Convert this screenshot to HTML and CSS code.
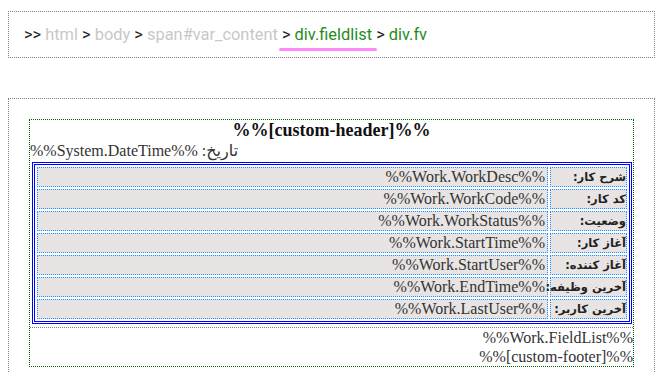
FILE: index.html
```html
<!DOCTYPE html>
<html lang="fa">
<head>
    <meta charset="UTF-8">
    <title>Field List</title>
    <link rel="stylesheet" href="styles.css">
</head>
<body>
    <!-- element path -->
    <div class="crumbs">
        <span class="sep">&gt;&gt;</span>
        <span class="off">html</span>
        <span class="sep">&gt;</span>
        <span class="off">body</span>
        <span class="sep">&gt;</span>
        <span class="off">span#var_content</span>
        <span class="mark"><span class="sep">&gt;</span> <span class="on">div.fieldlist</span></span>
        <span class="sep">&gt;</span>
        <span class="on">div.fv</span>
    </div>

    <div class="page">
        <div class="fieldlist">
            <div class="head">%%[custom-header]%%</div>
            <div class="date" dir="rtl">تاریخ: %%System.DateTime%%</div>

            <div class="fv">
                <table class="fields" dir="rtl">
                    <tr><th>شرح کار:</th><td>%%Work.WorkDesc%%</td></tr>
                    <tr><th>کد کار:</th><td>%%Work.WorkCode%%</td></tr>
                    <tr><th>وضعیت:</th><td>%%Work.WorkStatus%%</td></tr>
                    <tr><th>آغاز کار:</th><td>%%Work.StartTime%%</td></tr>
                    <tr><th>آغاز کننده:</th><td>%%Work.StartUser%%</td></tr>
                    <tr><th>آخرین وظیفه:</th><td>%%Work.EndTime%%</td></tr>
                    <tr><th>آخرین کاربر:</th><td>%%Work.LastUser%%</td></tr>
                </table>
            </div>

            <div class="extra">%%Work.FieldList%%</div>
            <div class="extra">%%[custom-footer]%%</div>
        </div>
    </div>
</body>
</html>
```

FILE: styles.css
```css
body {
    margin: 0;
    background-color: #fff;
    font-family: "Liberation Serif", "DejaVu Sans", serif;
    color: #333;
}

.crumbs {
    margin: 11px 13px 0 8px;
    padding: 13px 15px;
    border: 1px dotted #808080;
    font-family: Roboto, "Liberation Sans", sans-serif;
    font-size: 16.4px;
    line-height: 19px;
    color: #222;
}

.crumbs .off {
    color: #c8c8c8;
}

.crumbs .on {
    color: #1e8c1e;
}

.mark {
    position: relative;
}

.mark::after {
    content: "";
    position: absolute;
    left: -3px;
    right: -5px;
    bottom: -7px;
    height: 3px;
    border-radius: 2px;
    background-color: #ff88ff;
}

.page {
    margin: 40px 13px 0 8px;
    padding: 20px;
    border: 1px dotted #808080;
}

.fieldlist {
    border: 1px dotted #006400;
}

.head {
    text-align: center;
    font-size: 18px;
    font-weight: bold;
    line-height: 21px;
    color: #111;
}

.date {
    text-align: left;
    font-size: 16px;
    line-height: 20px;
}

.fv {
    padding-bottom: 3px;
    border-bottom: 1px dotted #808080;
}

.fields {
    width: calc(100% - 3px);
    margin: 1px 1px 0 2px;
    border: 3px double #0000ff;
    border-spacing: 2px;
    table-layout: fixed;
}

.fields th,
.fields td {
    height: 18px;
    padding: 0 2px;
    border: 1px dotted #1e90ff;
    background-color: #e8e4e3;
    text-align: right;
    font-size: 16px;
    line-height: 18px;
    white-space: nowrap;
}

.fields th {
    width: 74px;
    padding: 0 0 0 1px;
    font-family: "DejaVu Sans", sans-serif;
    font-size: 11.5px;
    color: #222;
}

.extra {
    text-align: right;
    font-size: 16px;
    line-height: 19px;
}
```
